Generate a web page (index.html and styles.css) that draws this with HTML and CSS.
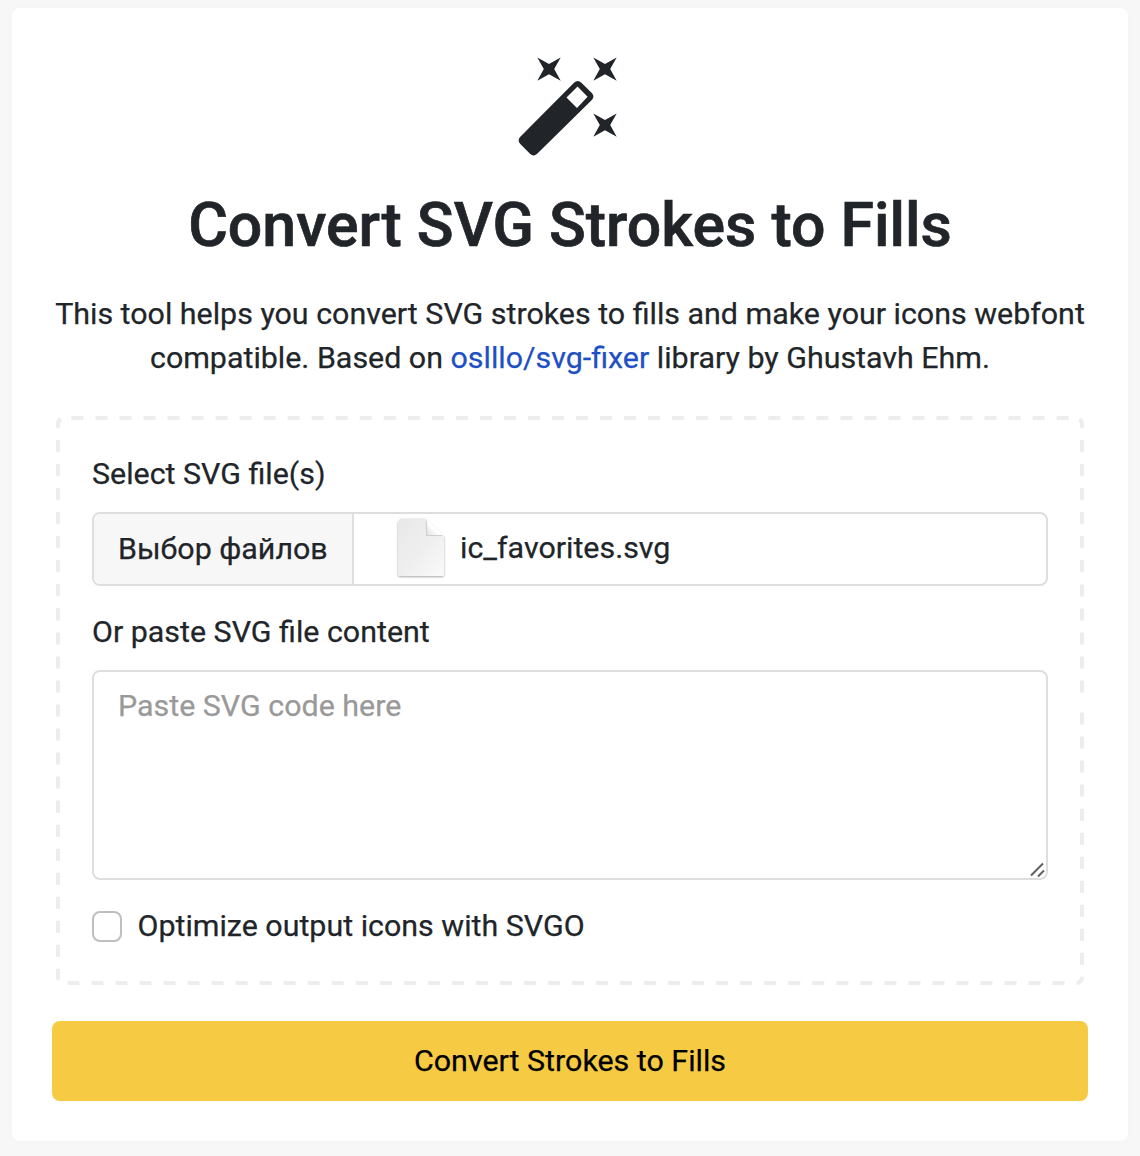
FILE: index.html
```html
<!DOCTYPE html>
<html lang="en">
<head>
<meta charset="utf-8">
<title>Convert SVG Strokes to Fills</title>
<link rel="stylesheet" href="styles.css">
</head>
<body>
<main class="card">
  <svg class="wand" viewBox="0 0 104 100" aria-hidden="true">
    <path fill-rule="evenodd" d="M2.300 79.700 56 25.700Q59.700 22.300 63.400 25.700L73.800 36Q77.100 39.500 73.800 43L19.200 96.800Q15.600 100.100 12 96.800L2.300 87Q-1 83.400 2.300 79.700ZM48.500 40.500 59 51 69.600 39.700 59.500 29.500Z"/>
    <path id="star" d="M19.300.500 31 7 42.700.500 36.200 12 42.700 23.700 31 17.200 19.300 23.700 25.800 12Z"/>
    <use href="#star" x="56"/>
    <use href="#star" x="56" y="56"/>
  </svg>
  <h1 class="title">Convert SVG Strokes to Fills</h1>
  <p class="intro">This tool helps you convert SVG strokes to fills and make your icons webfont compatible. Based on <a class="link" href="#">oslllo/svg-fixer</a> library by Ghustavh Ehm.</p>
  <form class="form">
    <div class="dropzone">
      <svg class="dashes" aria-hidden="true"><path d="M1028 284.500V561A8 8 0 0 1 1020 569H8A8 8 0 0 1 0 561V8A8 8 0 0 1 8 0H1020A8 8 0 0 1 1028 8V284.500"/></svg>
      <label class="label">Select SVG file(s)</label>
      <div class="file">
        <span class="file-button">Выбор файлов</span>
        <svg class="file-icon" viewBox="0 0 52 64" aria-hidden="true">
          <defs>
            <linearGradient id="page" x1="0" y1="0" x2="1" y2="1"><stop stop-color="#e8e8e8"/><stop offset=".55" stop-color="#efefef"/><stop offset="1" stop-color="#fafafa"/></linearGradient>
            <linearGradient id="fold" x1="0" y1="1" x2=".6" y2=".4"><stop stop-color="#e0e0e0"/><stop offset=".7" stop-color="#fff"/></linearGradient>
            <filter id="shade" x="-10%" y="-10%" width="120%" height="120%"><feDropShadow dx="0" dy="1" stdDeviation="1.200" flood-opacity=".35"/></filter>
          </defs>
          <path fill="url(#page)" filter="url(#shade)" d="M6 1.500H30L49 19V57Q49 59 47 59H5Q3 59 3 57V4.500Z"/>
          <path fill="url(#fold)" d="M32 3V18H48Z"/>
          <path fill="none" stroke="#d0d0d0" stroke-width="1.200" d="M31.500 4V18.500H47"/>
        </svg>
        <span class="file-name">ic_favorites.svg</span>
      </div>
      <label class="label" for="code">Or paste SVG file content</label>
      <div class="code-wrap">
        <textarea class="code" id="code" placeholder="Paste SVG code here"></textarea>
        <svg class="grip" viewBox="0 0 16 16" aria-hidden="true"><path d="M1 13.500 13 1.500M8 14.500 14 8.500"/></svg>
      </div>
      <label class="option"><input class="check" type="checkbox">Optimize output icons with SVGO</label>
    </div>
    <button class="submit" type="button">Convert Strokes to Fills</button>
  </form>
</main>
</body>
</html>
```
FILE: styles.css
```css
* { box-sizing: border-box; }
body {
  margin: 0;
  padding: 8px 12px 15px;
  background: #f7f7f7;
  color: #212529;
  font: 30.4px/44px Roboto, sans-serif;
  -webkit-text-stroke: .25px;
}
.card {
  height: 1133px;
  padding: 49px 40px 40px;
  border-radius: 8px;
  background: #fff;
  box-shadow: 0 0 16px rgba(0, 30, 20, .015);
}
.wand { display: block; width: 104px; height: 100px; margin: 0 auto; fill: #212529; }
.title { margin: 31px 0 0; font-size: 60.8px; line-height: 76px; font-weight: 500; text-align: center; -webkit-text-stroke: .7px; }
.intro { margin: 28px -4px 36px; text-align: center; }
.link { color: #1f4fc4; text-decoration: none; }
.dropzone {
  position: relative;
  height: 569px;
  margin: 0 4px 36px;
  padding: 36px;
}
.dashes { position: absolute; inset: 0; width: 100%; height: 100%; border-radius: 8px; overflow: hidden; pointer-events: none; }
.dashes path { fill: none; stroke: #ededed; stroke-width: 8; stroke-dasharray: 12.015; stroke-dashoffset: 12.015; }
.label { display: block; }
.file {
  display: flex;
  align-items: center;
  height: 74px;
  margin: 16px 0 24px;
  border: 2px solid #dedede;
  border-radius: 8px;
  overflow: hidden;
}
.file-button {
  width: 260px;
  padding: 13px 0 13px 24px;
  border-right: 2px solid #dedede;
  background: #f7f7f7;
}
.file-icon { width: 52px; height: 64px; margin-left: 41px; }
.file-name { margin: 0 0 2px 13px; }
.code-wrap { position: relative; height: 210px; margin: 16px 0 24px; }
.code {
  display: block;
  width: 100%;
  height: 210px;
  padding: 12px 24px;
  border: 2px solid #dedede;
  border-radius: 8px;
  background: #fff;
  color: inherit;
  font: inherit;
  resize: none;
}
.code::placeholder { color: #999; }
.grip { position: absolute; right: 2px; bottom: 2px; width: 16px; height: 16px; fill: none; stroke: #606060; stroke-width: 2; }
.option { display: flex; align-items: center; gap: 15.5px; }
.check { appearance: none; width: 30px; height: 31px; margin: 0; border: 2px solid #bfbfbf; border-radius: 8px; background: #fff; }
.submit {
  display: block;
  width: 100%;
  height: 80px;
  padding: 0;
  border: 0;
  border-radius: 8px;
  background: #f6cb43;
  color: #000;
  font: inherit;
}
```
